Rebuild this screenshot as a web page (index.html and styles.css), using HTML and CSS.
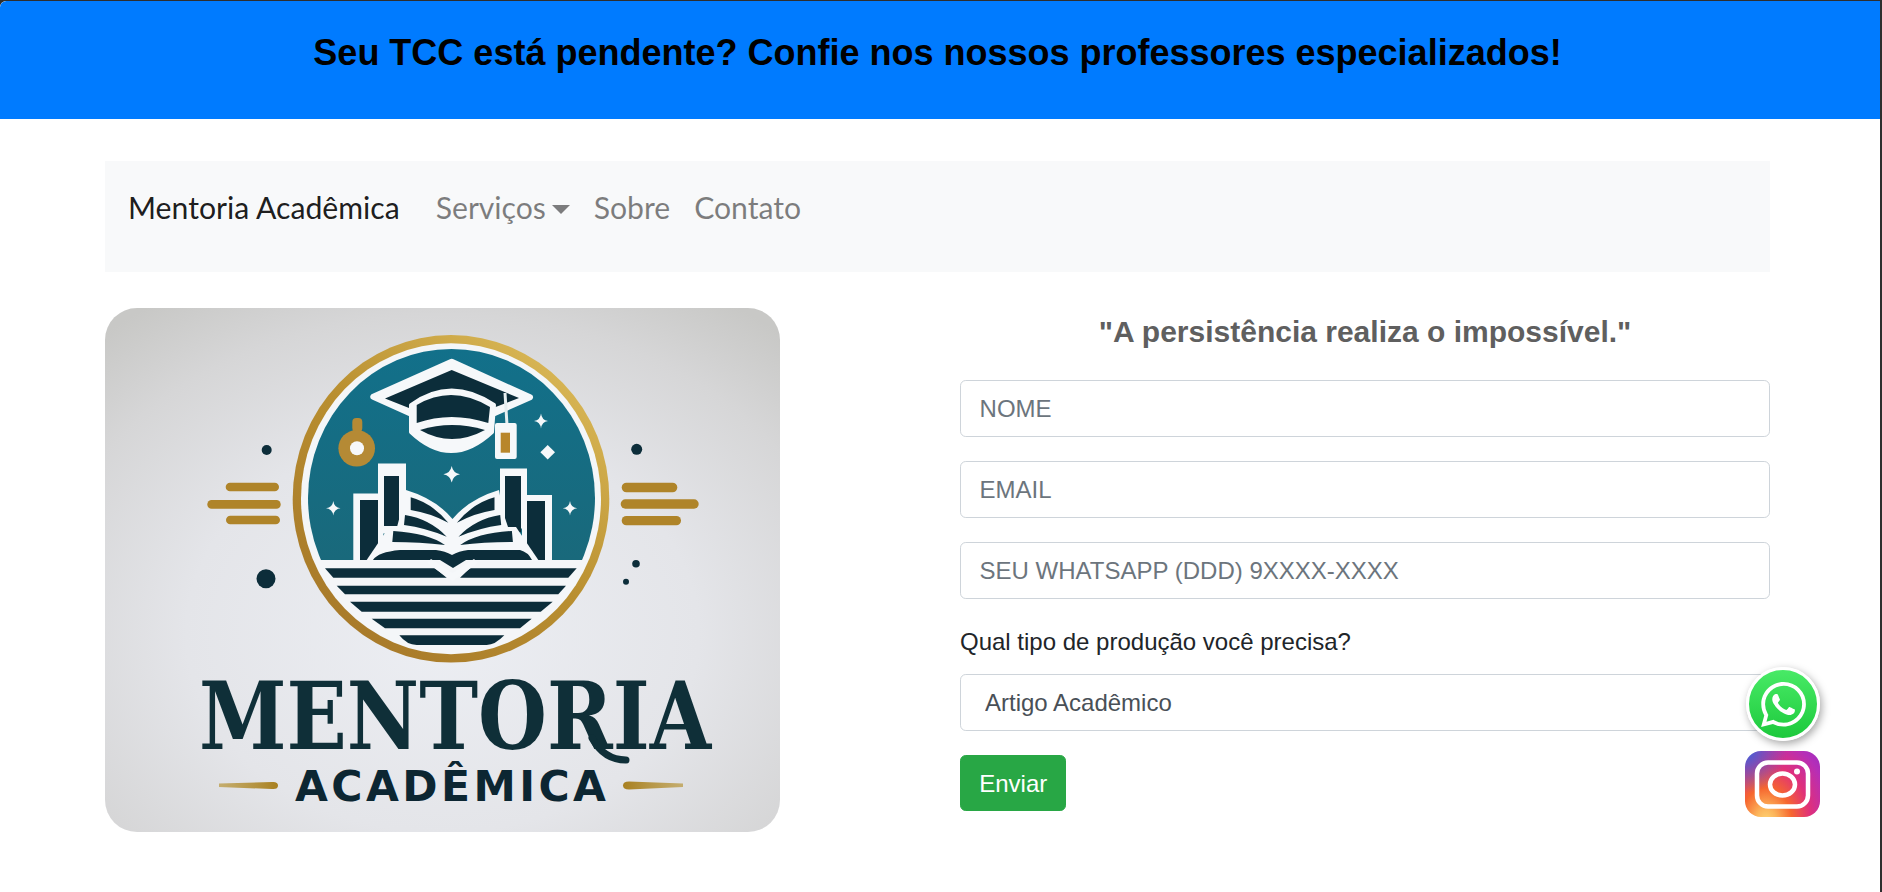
FILE: index.html
```html
<!DOCTYPE html>
<html lang="pt-BR">
<head>
<meta charset="utf-8">
<title>Mentoria Acadêmica</title>
<link rel="stylesheet" href="styles.css">
</head>
<body>
<header class="banner"><h1 class="banner-title">Seu TCC está pendente? Confie nos nossos professores especializados!</h1></header>
<div class="page">
  <nav class="navbar">
    <a class="brand" href="#">Mentoria Acadêmica</a>
    <ul class="nav-list">
      <li><a class="nav-link" href="#">Serviços<span class="caret"></span></a></li>
      <li><a class="nav-link" href="#">Sobre</a></li>
      <li><a class="nav-link" href="#">Contato</a></li>
    </ul>
  </nav>
  <main class="content">
    <svg class="logo" viewBox="105 308 675 524" role="img" aria-label="Mentoria Acadêmica">
      <defs>
        <radialGradient id="bg" cx="50%" cy="62%" r="76%">
          <stop offset="0" stop-color="#eceef3"/>
          <stop offset=".5" stop-color="#e4e5e9"/>
          <stop offset=".8" stop-color="#d6d6d7"/>
          <stop offset="1" stop-color="#c8c8c6"/>
        </radialGradient>
        <linearGradient id="gold" x1=".85" y1=".1" x2=".2" y2=".9">
          <stop offset="0" stop-color="#d8b655"/>
          <stop offset=".5" stop-color="#b98f30"/>
          <stop offset="1" stop-color="#a97b2a"/>
        </linearGradient>
        <linearGradient id="teal" x1="0" y1="0" x2="0" y2="1">
          <stop offset="0" stop-color="#12708a"/>
          <stop offset="1" stop-color="#1c6675"/>
        </linearGradient>
        <linearGradient id="dashL" x1="0" y1="0" x2="1" y2="0">
          <stop offset="0" stop-color="#bb9c48" stop-opacity=".75"/>
          <stop offset="1" stop-color="#a88020"/>
        </linearGradient>
        <linearGradient id="dashR" x1="0" y1="0" x2="1" y2="0">
          <stop offset="0" stop-color="#a88020"/>
          <stop offset="1" stop-color="#bb9c48" stop-opacity=".75"/>
        </linearGradient>
        <clipPath id="sky"><rect x="290" y="330" width="320" height="230"/></clipPath>
      </defs>
      <rect x="105" y="308" width="675" height="524" rx="32" fill="url(#bg)"/>

      <ellipse cx="451" cy="498.8" rx="158.3" ry="163.8" fill="url(#gold)"/>
      <ellipse cx="451" cy="498.8" rx="150" ry="155.5" fill="#f4f6f8"/>
      <ellipse cx="451.5" cy="498" rx="143.5" ry="149" fill="url(#teal)" clip-path="url(#sky)"/>

      <g class="dark">
        <path d="M325 568.3H435L446.7 577.7H333.3Z"/>
        <path d="M470 568.3H576.7L568.3 577.7H460Z"/>
        <path d="M336.7 585.7H566L558.3 594.3H345Z"/>
        <path d="M350 601.7H552.7L540.7 611.7H361.7Z"/>
        <path d="M371.7 618.7H531.7L520 628.3H385Z"/>
        <path d="M399.3 635.3H504.3Q495 645 486.7 645H416.7Q407 645 399.3 635.3Z"/>
      </g>

      <rect class="white" x="353.3" y="493.5" width="30" height="66.5"/>
      <rect class="dark" x="360" y="500" width="18" height="60"/>
      <rect class="white" x="378" y="463.5" width="28" height="70"/>
      <rect class="dark" x="384" y="476" width="15" height="50"/>
      <rect class="white" x="500" y="468.5" width="27" height="60"/>
      <rect class="dark" x="505" y="476" width="16" height="56"/>
      <rect class="white" x="522" y="495" width="30" height="65"/>
      <rect class="dark" x="527" y="501" width="18" height="59"/>

      <path class="white" d="M366 561L389 527H516L539 561Z"/>
      <path class="white" d="M406 490Q436 499 452.5 519Q469 499 499 490L503 512L508 527H397L401 512Z"/>
      <g class="pages">
        <path d="M410.7 497.3Q432 503 448.3 522.7Q430 513 410.7 510Z"/>
        <path d="M405 515Q430 519 446.7 536.7Q426 528 404 525Z"/>
        <path d="M393.3 531Q428 533 445 545Q420 542 392.3 542Z"/>
        <path d="M494.5 497.3Q473.2 503 456.9 522.7Q475.2 513 494.5 510Z"/>
        <path d="M500.2 515Q475.2 519 458.5 536.7Q479.2 528 501.2 525Z"/>
        <path d="M511.9 531Q477.2 533 460.2 545Q485.2 542 512.9 542Z"/>
      </g>
      <path class="dark" d="M373 560Q378 552 400 550H436Q445 551 452 555Q459 551 468 550H520Q528 552 532 560H466L453 568L440 560Z"/>
      <path class="white" d="M431 559L452.5 573L474 559L478 563L452.5 581L427 563Z"/>

      <path class="white round" d="M451.7 361.7L530 397.3L451.7 432L373.3 396.7Z"/>
      <path class="dark" d="M451.7 370L519 398L493 408L452 425L385 398.5Z"/>
      <path class="cap-outline" d="M411 405Q451 376 494 405L492 432Q451 470 411 432Z"/>
      <path class="dark" d="M416.7 405Q452 384 490 407L488.3 423Q451 411 416.7 423Z"/>
      <path class="dark" d="M420 430Q451.7 420 485 430Q451.7 448 420 430Z"/>
      <path class="cord" d="M505 393L507 425"/>
      <rect class="white" x="495" y="423" width="21.7" height="36" rx="2"/>
      <rect class="goldfill" x="500.7" y="432.7" width="9.3" height="20"/>

      <rect class="goldfill2" x="352.3" y="418" width="10" height="14" rx="4"/>
      <circle class="goldfill2" cx="356.7" cy="448.3" r="18.3"/>
      <circle class="white" cx="357" cy="448.3" r="7"/>

      <g class="white">
        <path d="M541 413.5Q541.8 420.2 548 421Q541.8 421.8 541 428.5Q540.2 421.8 534 421Q540.2 420.2 541 413.5Z"/>
        <path d="M547.7 445L555 452.3L547.7 459.6L540.4 452.3Z"/>
        <path d="M451.7 466Q453 473 460 474.3Q453 475.6 451.7 482.6Q450.4 475.6 443.4 474.3Q450.4 473 451.7 466Z"/>
        <path d="M333.3 501Q334.1 507.5 340.5 508.3Q334.1 509.1 333.3 515.6Q332.5 509.1 326 508.3Q332.5 507.5 333.3 501Z"/>
        <path d="M570 501Q570.8 507.5 577.2 508.3Q570.8 509.1 570 515.6Q569.2 509.1 562.8 508.3Q569.2 507.5 570 501Z"/>
      </g>

      <g class="bars">
        <rect x="225.7" y="482.7" width="53.3" height="8.6" rx="4.3"/>
        <rect x="207.3" y="500" width="73.4" height="8.7" rx="4.3"/>
        <rect x="226" y="515.7" width="54" height="8.6" rx="4.3"/>
        <rect x="621.7" y="482.7" width="55.6" height="9.6" rx="4.8"/>
        <rect x="620.7" y="499.3" width="78" height="9.4" rx="4.7"/>
        <rect x="621.7" y="516" width="59.3" height="9.3" rx="4.6"/>
      </g>
      <g class="dark">
        <circle cx="266.7" cy="450" r="5"/>
        <circle cx="266" cy="578.7" r="9.5"/>
        <circle cx="636.7" cy="449.3" r="5.5"/>
        <circle cx="636" cy="563.7" r="3.8"/>
        <circle cx="626" cy="581.7" r="3"/>
      </g>

      <text class="logo-main" x="199" y="749" textLength="512" lengthAdjust="spacingAndGlyphs">MENTORIA</text>
      <path class="tail" d="M592 738Q604 760 626 760"/>
      <text class="logo-sub" x="295" y="800.7" textLength="311" lengthAdjust="spacing">ACADÊMICA</text>
      <path fill="url(#dashL)" d="M219 783.5L272 782Q278 781.5 278 785.5Q278 789.5 272 789L219 787Z"/>
      <path fill="url(#dashR)" d="M683 783.5L629 781.5Q623 781.5 623 785.5Q623 789.5 629 789.5L683 787Z"/>
    </svg>

    <section class="form-col">
      <h2 class="quote">"A persistência realiza o impossível."</h2>
      <form class="form">
        <input class="control" type="text" placeholder="NOME">
        <input class="control" type="email" placeholder="EMAIL">
        <input class="control" type="tel" placeholder="SEU WHATSAPP (DDD) 9XXXX-XXXX">
        <div class="field">
          <label class="label" for="tipo">Qual tipo de produção você precisa?</label>
          <select class="control select" id="tipo">
            <option>Artigo Acadêmico</option>
            <option>TCC</option>
            <option>Monografia</option>
          </select>
        </div>
        <button class="submit" type="button">Enviar</button>
      </form>
    </section>
  </main>
</div>

<a class="float-wa" href="#" aria-label="WhatsApp">
  <svg class="wa-glyph" viewBox="0 0 24 24"><path d="M17.472 14.382c-.297-.149-1.758-.867-2.03-.967-.273-.099-.471-.148-.67.15-.197.297-.767.966-.94 1.164-.173.199-.347.223-.644.075-.297-.15-1.255-.463-2.39-1.475-.883-.788-1.48-1.761-1.653-2.059-.173-.297-.018-.458.13-.606.134-.133.298-.347.446-.52.149-.174.198-.298.298-.497.099-.198.05-.371-.025-.52-.075-.149-.669-1.612-.916-2.207-.242-.579-.487-.5-.669-.51-.173-.008-.371-.01-.57-.01-.198 0-.52.074-.792.372-.272.297-1.04 1.016-1.04 2.479 0 1.462 1.065 2.875 1.213 3.074.149.198 2.096 3.2 5.077 4.487.709.306 1.262.489 1.694.625.712.227 1.36.195 1.871.118.571-.085 1.758-.719 2.006-1.413.248-.694.248-1.289.173-1.413-.074-.124-.272-.198-.57-.347m-5.421 7.403h-.004a9.87 9.87 0 01-5.031-1.378l-.361-.214-3.741.982.998-3.648-.235-.374a9.86 9.86 0 01-1.51-5.26c.001-5.45 4.436-9.884 9.888-9.884 2.64 0 5.122 1.03 6.988 2.898a9.825 9.825 0 012.893 6.994c-.003 5.45-4.437 9.884-9.885 9.884m8.413-18.297A11.815 11.815 0 0012.05 0C5.495 0 .16 5.335.157 11.892c0 2.096.547 4.142 1.588 5.945L.057 24l6.305-1.654a11.882 11.882 0 005.683 1.448h.005c6.554 0 11.89-5.335 11.893-11.893a11.821 11.821 0 00-3.48-8.413z"/></svg>
</a>
<a class="float-ig" href="#" aria-label="Instagram">
  <svg class="ig-glyph" viewBox="0 0 75 66">
    <rect class="ig-line" x="12" y="11.5" width="51" height="44" rx="11"/>
    <ellipse class="ig-line" cx="37.5" cy="33.5" rx="12.5" ry="11"/>
    <circle class="ig-dot" cx="52" cy="20.5" r="3"/>
  </svg>
</a>
</body>
</html>
```

FILE: styles.css
```css
* { box-sizing: border-box; }

html {
  background: #2e2e2e;
  height: 100%;
  overflow: hidden;
}

body {
  margin: 1px 2px 0 0;
  min-height: calc(100vh - 1px);
  background: #fff;
  color: #212529;
  font-family: "Liberation Sans", Arial, sans-serif;
  border-top-left-radius: 6px;
}

.banner {
  height: 118px;
  background: #007bff;
  border-top-left-radius: 6px;
  padding: 31px 5px 0 0;
  text-align: center;
}

.banner-title {
  margin: 0;
  font-size: 36px;
  line-height: 42px;
  font-weight: 700;
  color: #000;
}

.page { padding: 42px 110px 0 105px; }

.navbar {
  display: flex;
  align-items: flex-start;
  height: 111px;
  padding: 28px 0 0 23px;
  background: #f8f9fa;
  font-family: Lato, "Noto Sans", sans-serif;
  font-size: 30.2px;
  line-height: 36px;
}

.brand {
  color: rgba(0, 0, 0, .9);
  text-decoration: none;
  margin-right: 36px;
}

.nav-list {
  display: flex;
  gap: 24px;
  list-style: none;
  margin: 0;
  padding: 0;
}

.nav-link {
  color: rgba(0, 0, 0, .5);
  text-decoration: none;
  letter-spacing: -.04px;
}

.caret {
  display: inline-block;
  margin-left: 6px;
  vertical-align: 5px;
  border-top: 9.6px solid rgba(0, 0, 0, .5);
  border-left: 9px solid transparent;
  border-right: 9px solid transparent;
}

.content {
  display: grid;
  grid-template-columns: 675px 810px;
  column-gap: 180px;
  margin-top: 36px;
}

.logo {
  display: block;
  width: 675px;
  height: 524px;
}

.dark { fill: #0c2d3a; }
.white { fill: #f6f8fa; }
.round { stroke: #f6f8fa; stroke-width: 6; stroke-linejoin: round; }
.pages path { fill: #0c2d3a; stroke: #f6f8fa; stroke-width: 3; stroke-linejoin: round; paint-order: stroke; }
.cap-outline { fill: #f6f8fa; stroke: #f6f8fa; stroke-width: 4; stroke-linejoin: round; }
.cord { fill: none; stroke: #e6eef0; stroke-width: 3; }
.goldfill { fill: #b8862b; }
.goldfill2 { fill: #b58a35; }
.bars { fill: #af8429; }
.tail { fill: none; stroke: #0f2f38; stroke-width: 7; stroke-linecap: round; }
.logo-main {
  font-family: "DejaVu Serif", serif;
  font-weight: 700;
  font-size: 93.7px;
  fill: #0f2f38;
}
.logo-sub {
  font-family: "DejaVu Sans", sans-serif;
  font-weight: 700;
  font-size: 42.5px;
  fill: #0c2632;
}

.form-col { padding-top: 4px; }

.quote {
  margin: 0 0 28px;
  text-align: center;
  font-size: 30px;
  line-height: 40px;
  font-weight: 700;
  color: #5f5f5f;
}

.form {
  display: flex;
  flex-direction: column;
  gap: 24px;
}

.control {
  display: block;
  width: 100%;
  height: 57px;
  padding: 9.6px 18.6px;
  font-family: inherit;
  font-size: 24px;
  line-height: 36px;
  color: #495057;
  background: #fff;
  border: 1px solid #ced4da;
  border-radius: 5.76px;
}

.control::placeholder { color: #6c757d; opacity: 1; }

.select {
  appearance: none;
  padding-left: 24px;
}

.label {
  display: block;
  font-size: 24px;
  line-height: 36px;
  padding-top: 1px;
  margin-bottom: 14px;
}

.submit {
  align-self: flex-start;
  height: 56px;
  padding: 9.6px 18.2px;
  font-family: inherit;
  font-size: 24px;
  line-height: 36px;
  color: #fff;
  background: #28a745;
  border: 1px solid #28a745;
  border-radius: 5.76px;
}

.float-wa {
  position: fixed;
  left: 1746px;
  top: 667px;
  width: 74px;
  height: 74px;
  display: flex;
  align-items: center;
  justify-content: center;
  border: 3px solid #fff;
  border-radius: 50%;
  background: linear-gradient(#48ea66, #1dc93c);
  box-shadow: 2px 3px 8px rgba(0, 0, 0, .35);
}

.wa-glyph { width: 45px; height: 45px; fill: #fff; }

.float-ig {
  position: fixed;
  left: 1745px;
  top: 751px;
  width: 75px;
  height: 66px;
  border-radius: 16px;
  background:
    radial-gradient(circle at 0% 0%, #3d63da 0, rgba(61, 99, 218, 0) 42%),
    radial-gradient(ellipse at 28% 108%, #fed877 0, #fcb45a 14%, #f6662f 34%, #e0307a 58%, #b52eb8 85%, #9a2fc0 100%);
}

.ig-glyph { display: block; width: 75px; height: 66px; }
.ig-line { fill: none; stroke: #fff; stroke-width: 4.5; }
.ig-dot { fill: #fff; }
```
